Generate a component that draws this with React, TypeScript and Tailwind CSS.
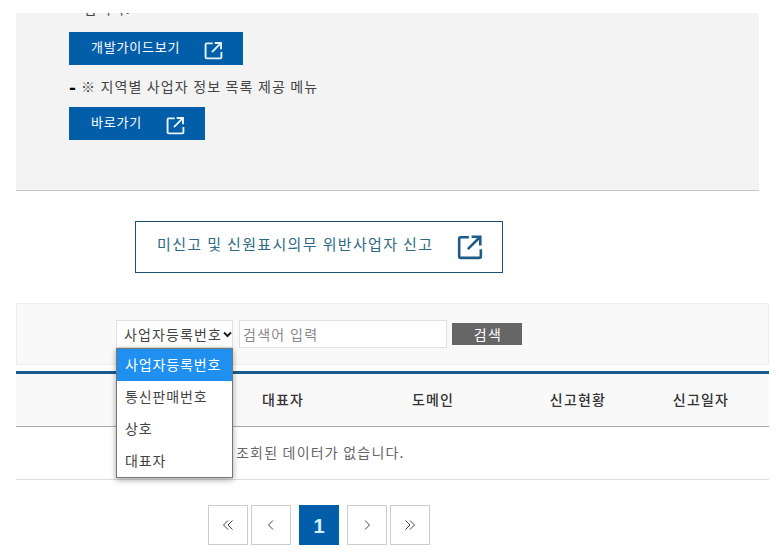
const font = "font-['Noto_Sans_CJK_KR','Noto_Sans',sans-serif]";

function ExtIcon({ size, color, sw }: { size: number; color: string; sw: number }) {
  return (
    <svg width={size} height={size} viewBox="0 0 24 24" fill="none" stroke={color} strokeWidth={sw} className="shrink-0">
      <path d="M11 3H3.500Q2 3 2 4.500V20.500Q2 22 3.500 22H20.500Q22 22 22 20.500V14" />
      <path d="M10 14L21 3M13.500 2.500H21.500V10.500" />
    </svg>
  );
}

function Chev({ d }: { d: string }) {
  return (
    <svg width="14" height="14" viewBox="0 0 14 14" fill="none" stroke="#444" strokeWidth="1">
      <path d={d} />
    </svg>
  );
}

function PageBtn({ d }: { d: string }) {
  return (
    <div className="w-10 h-10 border border-[#ccc] bg-white flex items-center justify-center">
      <Chev d={d} />
    </div>
  );
}

const headers = [
  { w: "w-[170px]", t: "" },
  { w: "w-[162px]", t: "대표자" },
  { w: "w-[138px]", t: "도메인" },
  { w: "w-[152px]", t: "신고현황" },
  { w: "w-[94px]", t: "신고일자" },
];

export default function App() {
  return (
    <div className={`${font} w-[779px] h-[559px] overflow-hidden bg-white pt-[13px] pl-4 pr-[10px] text-[#333]`}>
      <div className="w-[743px] h-[178px] bg-[#f3f3f4] border-b border-[#c8c8c8] overflow-hidden pl-[53px]">
        <p className="-mt-[15px] h-[34px] pl-[15px] text-[14px] tracking-[1px] leading-[20px] text-[#444]">합니다.</p>
        <a className="w-[174px] h-[33px] bg-[#035eaa] text-white flex items-center pl-[22px] text-[13px] tracking-[0.8px] pb-[3px]">
          <span className="w-[113px]">개발가이드보기</span>
          <span className="pt-[6px]"><ExtIcon size={19} color="#e6f4fb" sw={2.400} /></span>
        </a>
        <p className="h-[42px] flex items-center text-[14px] tracking-[1.150px] text-[#444]">
          <span className="w-[12px] text-black font-black text-[18px] leading-none">-</span>※ 지역별 사업자 정보 목록 제공 메뉴
        </p>
        <a className="w-[136px] h-[33px] bg-[#035eaa] text-white flex items-center pl-[22px] text-[13px] tracking-[0.8px] pb-[3px]">
          <span className="w-[75px]">바로가기</span>
          <span className="pt-[6px]"><ExtIcon size={19} color="#e6f4fb" sw={2.400} /></span>
        </a>
      </div>

      <a className="mt-[30px] ml-[119px] w-[368px] h-[52px] border border-[#1f5070] flex items-center pl-[21px] text-[15px] tracking-[1.350px] text-[#2f6a85]">
        <span className="w-[300px] pb-[5px] whitespace-nowrap">미신고 및 신원표시의무 위반사업자 신고</span>
        <ExtIcon size={26} color="#1d5c88" sw={2.400} />
      </a>

      <div className="relative mt-[30px] w-[753px]">
        <div className="h-[62px] bg-[#f9f9f9] border border-[#eeeeee] flex items-center pl-[99px] gap-[6px]">
          <div className="w-[117px] h-[28px] bg-white border border-[#e0e0e0] flex items-center pl-[7px] text-[14px] tracking-[1.100px] text-[#444] whitespace-nowrap">
            <span className="w-[99px] shrink-0">사업자등록번호</span>
            <svg width="9" height="7" viewBox="0 0 9 7" fill="none" stroke="#222" strokeWidth="2" className="shrink-0">
              <path d="M1 1.500L4.500 5L8 1.500" />
            </svg>
          </div>
          <div className="w-[208px] h-[28px] bg-white border border-[#e0e0e0] flex items-center pl-[3px] text-[14px] tracking-[1.300px] text-[#888]">
            검색어 입력
          </div>
          <div className="ml-[-1px] w-[70px] h-[22px] bg-[#666] text-white text-[14px] tracking-[1.300px] pl-[2px] flex items-center justify-center">
            검색
          </div>
        </div>

        <div className="mt-[6px] border-t-[3px] border-[#175a8c]">
          <div className="h-[53px] bg-[#f9f9f9] border-b border-[#aaaaaa] flex items-center pb-[2px] text-[14px] font-medium text-[#333] tracking-[1.200px]">
            {headers.map((h) => (
              <div key={h.w} className={`${h.w} text-center pl-[32px] whitespace-nowrap`}>{h.t}</div>
            ))}
          </div>
          <div className="h-[53px] border-b border-[#dddddd] flex items-center pl-[220px] pb-[1px] text-[14px] tracking-[1.200px] text-[#666]">
            조회된 데이터가 없습니다.
          </div>
        </div>

        <div className="absolute left-[100px] top-[45px] w-[117px] h-[130px] bg-white border border-[#767676] shadow-[0_2px_6px_rgba(0,0,0,0.35)] text-[14px] tracking-[0.850px] text-[#444]">
          <div className="h-[32px] bg-[#2090f0] text-white flex items-center pl-[8px] pb-[2px]">사업자등록번호</div>
          <div className="h-[32px] flex items-center pl-[8px] pb-[2px]">통신판매번호</div>
          <div className="h-[32px] flex items-center pl-[8px] pb-[2px]">상호</div>
          <div className="h-[32px] flex items-center pl-[8px] pb-[2px]">대표자</div>
        </div>
      </div>

      <div className="mt-[25px] ml-[192px] flex">
        <PageBtn d="M7 2.500L2.500 7L7 11.500M11.500 2.500L7 7L11.500 11.500" />
        <div className="ml-[3px]"><PageBtn d="M9 2.500L4.500 7L9 11.500" /></div>
        <div className="mx-2 w-10 h-10 bg-[#035eaa] text-[#d8f0ff] flex items-center justify-center pt-[2px] text-[20px] font-bold font-['Liberation_Sans',sans-serif]">1</div>
        <PageBtn d="M5 2.500L9.500 7L5 11.500" />
        <div className="ml-[3px]"><PageBtn d="M2.500 2.500L7 7L2.500 11.500M7 2.500L11.500 7L7 11.500" /></div>
      </div>
    </div>
  );
}
